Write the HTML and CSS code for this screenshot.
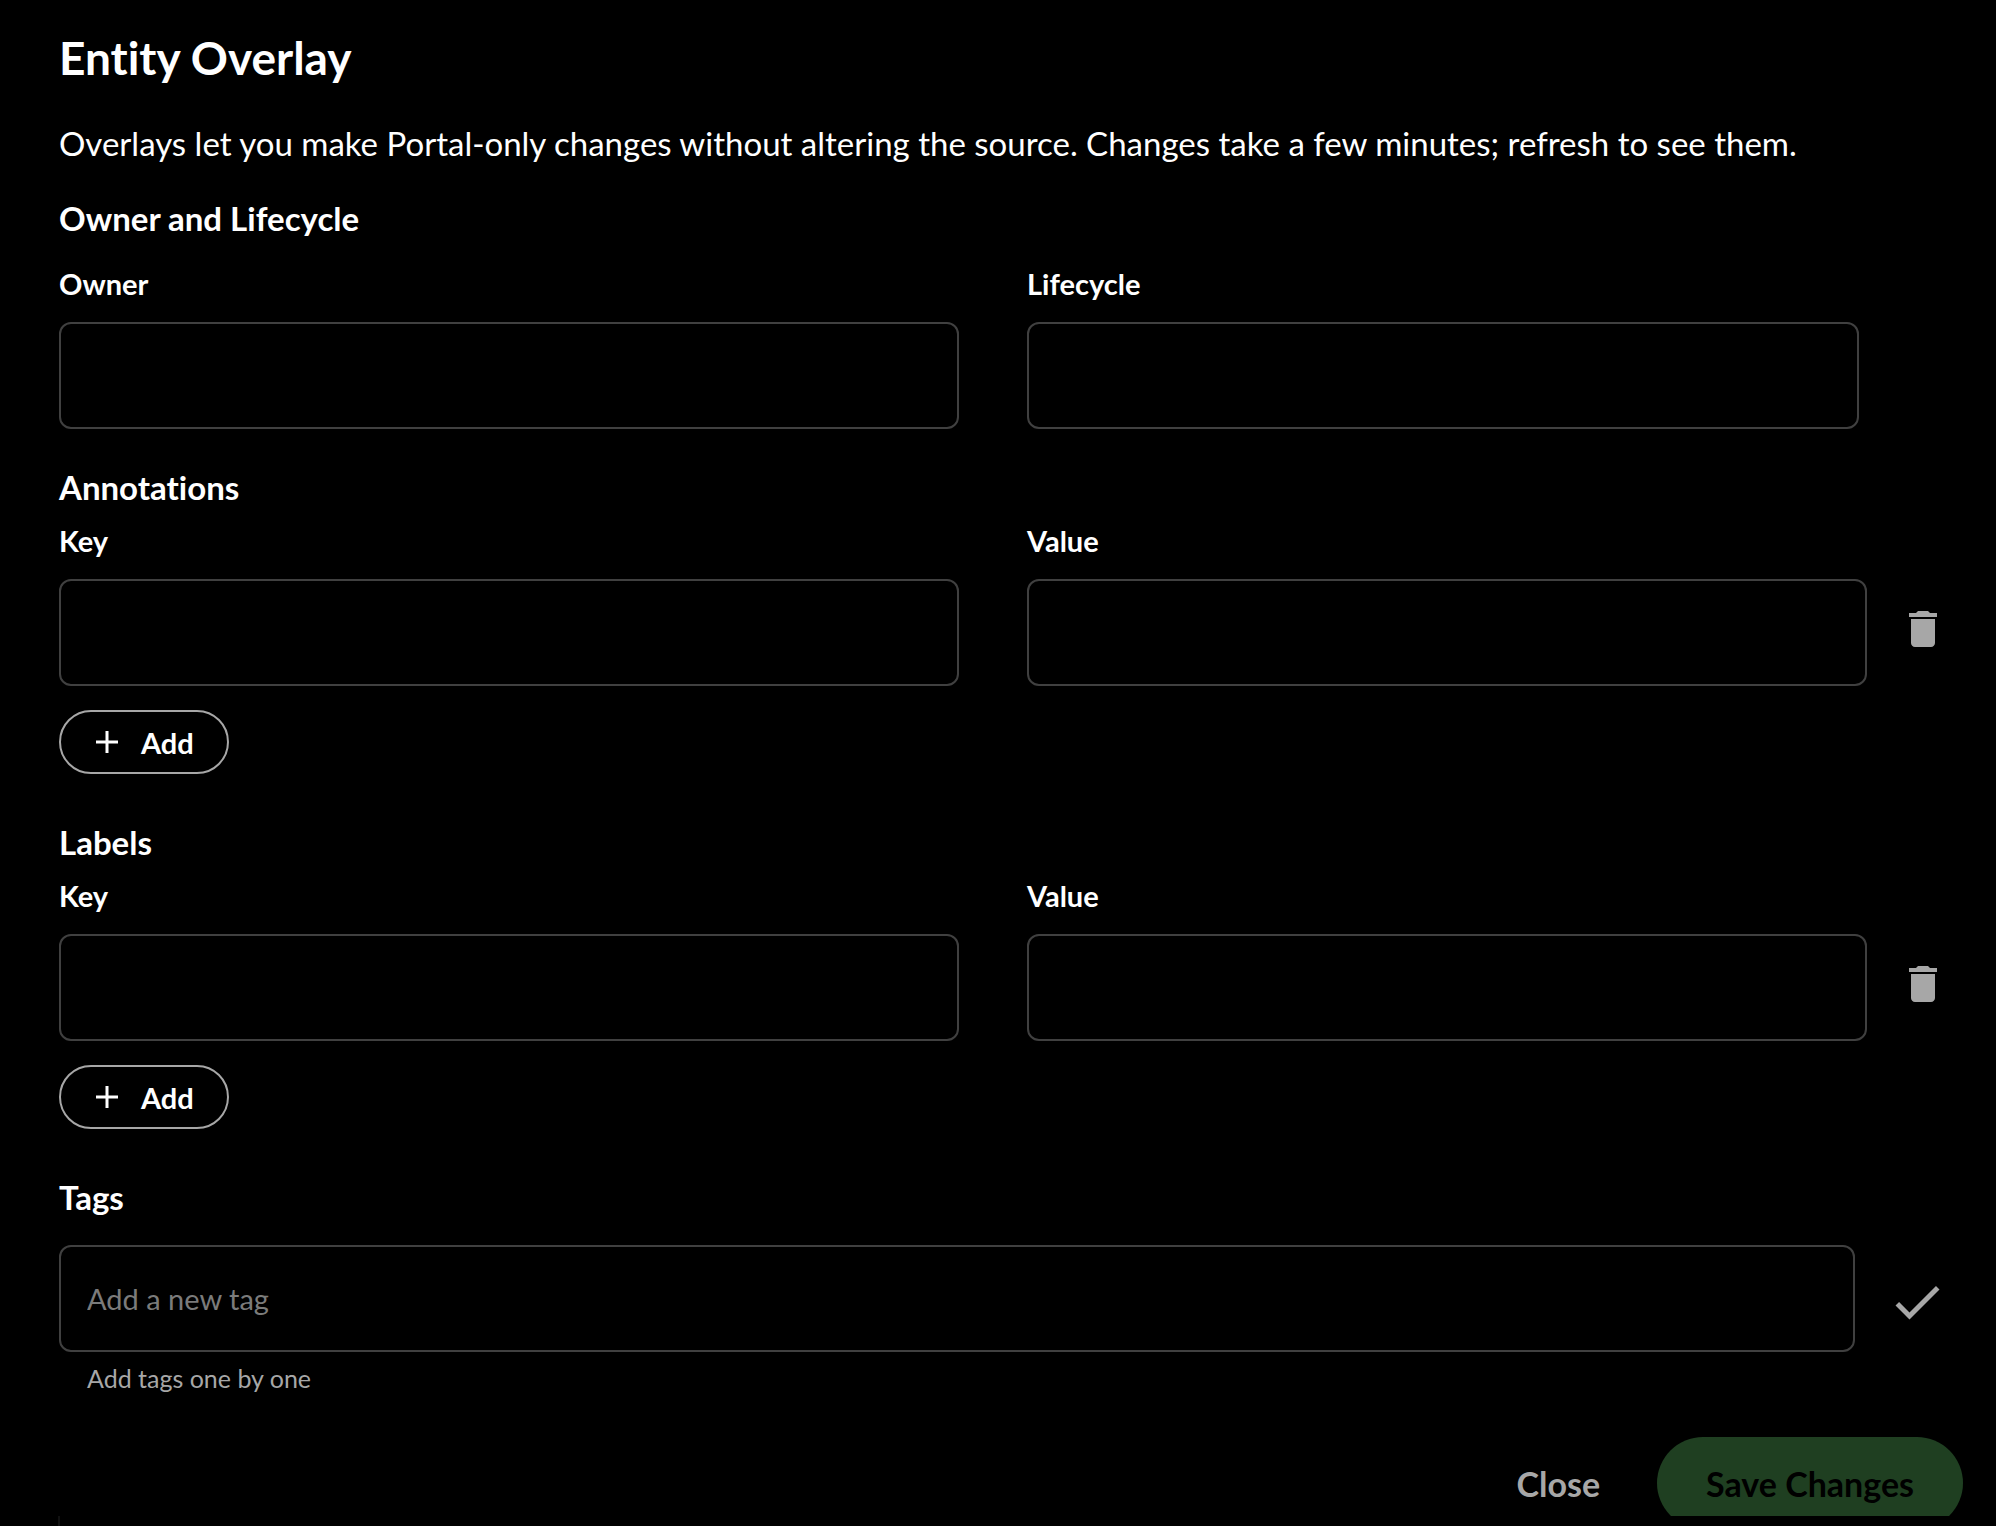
FILE: index.html
```html
<!DOCTYPE html>
<html lang="en">
<head>
    <meta charset="UTF-8">
    <meta name="viewport" content="width=device-width, initial-scale=1.0">
    <title>Entity Overlay</title>
    <link rel="stylesheet" href="styles.css">
</head>
<body>
    <main class="dialog">
        <h1>Entity Overlay</h1>
        <p class="intro">Overlays let you make Portal-only changes without altering the source. Changes take a few minutes; refresh to see them.</p>

        <form class="overlay-form">
            <section class="owner-section">
                <h2>Owner and Lifecycle</h2>
                <div class="row">
                    <div class="field">
                        <label for="owner">Owner</label>
                        <input type="text" id="owner">
                    </div>
                    <div class="field lifecycle">
                        <label for="lifecycle">Lifecycle</label>
                        <input type="text" id="lifecycle">
                    </div>
                </div>
            </section>

            <section class="pair-section">
                <h2>Annotations</h2>
                <div class="row">
                    <div class="field">
                        <label for="annotationKey">Key</label>
                        <input type="text" id="annotationKey">
                    </div>
                    <div class="with-action">
                        <div class="field">
                            <label for="annotationValue">Value</label>
                            <input type="text" id="annotationValue">
                        </div>
                        <button type="button" class="icon-btn" aria-label="Remove annotation">
                            <svg class="trash" viewBox="0 0 24 24"><path d="M6 19c0 1.1.9 2 2 2h8c1.1 0 2-.9 2-2V7H6v12zM19 4h-3.5l-1-1h-5l-1 1H5v2h14V4z"/></svg>
                        </button>
                    </div>
                </div>
                <button type="button" class="add-btn">
                    <svg viewBox="0 0 24 24"><path d="M12 1v22M1 12h22"/></svg>
                    Add
                </button>
            </section>

            <section class="pair-section">
                <h2>Labels</h2>
                <div class="row">
                    <div class="field">
                        <label for="labelKey">Key</label>
                        <input type="text" id="labelKey">
                    </div>
                    <div class="with-action">
                        <div class="field">
                            <label for="labelValue">Value</label>
                            <input type="text" id="labelValue">
                        </div>
                        <button type="button" class="icon-btn" aria-label="Remove label">
                            <svg class="trash" viewBox="0 0 24 24"><path d="M6 19c0 1.1.9 2 2 2h8c1.1 0 2-.9 2-2V7H6v12zM19 4h-3.5l-1-1h-5l-1 1H5v2h14V4z"/></svg>
                        </button>
                    </div>
                </div>
                <button type="button" class="add-btn">
                    <svg viewBox="0 0 24 24"><path d="M12 1v22M1 12h22"/></svg>
                    Add
                </button>
            </section>

            <section class="tags-section">
                <h2><label for="newTag">Tags</label></h2>
                <div class="with-action">
                    <input type="text" id="newTag" placeholder="Add a new tag" aria-describedby="tagHelp">
                    <button type="button" class="icon-btn confirm" aria-label="Add tag">
                        <svg class="check" viewBox="0 0 24 24"><path d="M9 16.17 4.83 12l-1.42 1.41L9 19 21 7l-1.41-1.41z"/></svg>
                    </button>
                </div>
                <p class="help" id="tagHelp">Add tags one by one</p>
            </section>

            <div class="actions">
                <button type="button" class="close-btn">Close</button>
                <button type="submit" class="save-btn" disabled>Save Changes</button>
            </div>
        </form>
    </main>
    <div class="page-edge"></div>
</body>
</html>
```
FILE: styles.css
```css
* {
    box-sizing: border-box;
}
body {
    margin: 0;
    background: #000;
    color: #fff;
    font-family: Lato, "Liberation Sans", sans-serif;
    font-variant-ligatures: none;
}
.dialog {
    height: calc(100vh - 10px);
    overflow: hidden;
    padding: 30px 49px 0 59px;
}
/* sliver of the page behind the dialog */
.page-edge {
    height: 10px;
    margin-left: 58px;
    border-left: 2px solid #111;
}
h1, h2, p {
    margin: 0;
}
h1 {
    font-size: 46px;
    line-height: 56px;
}
h2 {
    font-size: 33px;
    line-height: 40px;
    margin-bottom: 16px;
}
.intro {
    margin: 37px 0 35px;
    font-size: 33px;
    line-height: 40px;
}
.owner-section {
    margin-bottom: 38px;
}
.owner-section h2,
.tags-section h2 {
    margin-bottom: 28px;
}
.pair-section {
    margin-bottom: 48px;
}
.row {
    display: grid;
    grid-template-columns: 45fr 46fr;
    column-gap: 68px;
}
.field {
    flex: 1;
}
.field label {
    display: block;
    margin-bottom: 20px;
    font-size: 29px;
    font-weight: bold;
    line-height: 36px;
}
.lifecycle {
    padding-right: 88px;
}
input {
    display: block;
    width: 100%;
    height: 107px;
    padding: 0 26px;
    border: 2px solid #404040;
    border-radius: 12px;
    background: #000;
    color: #fff;
    font-family: inherit;
    font-size: 29px;
}
input::placeholder {
    color: #7b7b7b;
    opacity: 1;
}
.with-action {
    display: flex;
    align-items: flex-end;
    gap: 32px;
}
button {
    border: none;
    background: none;
    font-family: inherit;
    font-weight: bold;
    cursor: pointer;
}
.icon-btn {
    display: flex;
    align-items: center;
    height: 107px;
    padding: 0 0 8px;
}
.icon-btn.confirm {
    padding: 6px 0 0;
}
.icon-btn svg {
    fill: #a7a7a7;
}
.trash {
    width: 48px;
    height: 48px;
}
.check {
    width: 60px;
    height: 60px;
}
.add-btn {
    display: flex;
    align-items: center;
    gap: 22px;
    height: 64px;
    margin-top: 24px;
    padding: 0 33px 0 34px;
    border: 2px solid #a7a7a7;
    border-radius: 32px;
    color: #fff;
    font-size: 29px;
}
.add-btn svg {
    width: 24px;
    height: 24px;
    fill: none;
    stroke: #fff;
    stroke-width: 3;
}
.help {
    margin-top: 12px;
    padding-left: 28px;
    color: #a7a7a7;
    font-size: 25px;
    line-height: 28px;
}
.actions {
    display: flex;
    justify-content: flex-end;
    gap: 8px;
    margin: 45px -16px 0 0;
}
.close-btn,
.save-btn {
    height: 92px;
    padding: 0 49px;
    border-radius: 46px;
    font-size: 34px;
}
.close-btn {
    color: #a7a7a7;
}
.save-btn {
    background: #1f3f21;
    color: #000;
    cursor: default;
}
```
